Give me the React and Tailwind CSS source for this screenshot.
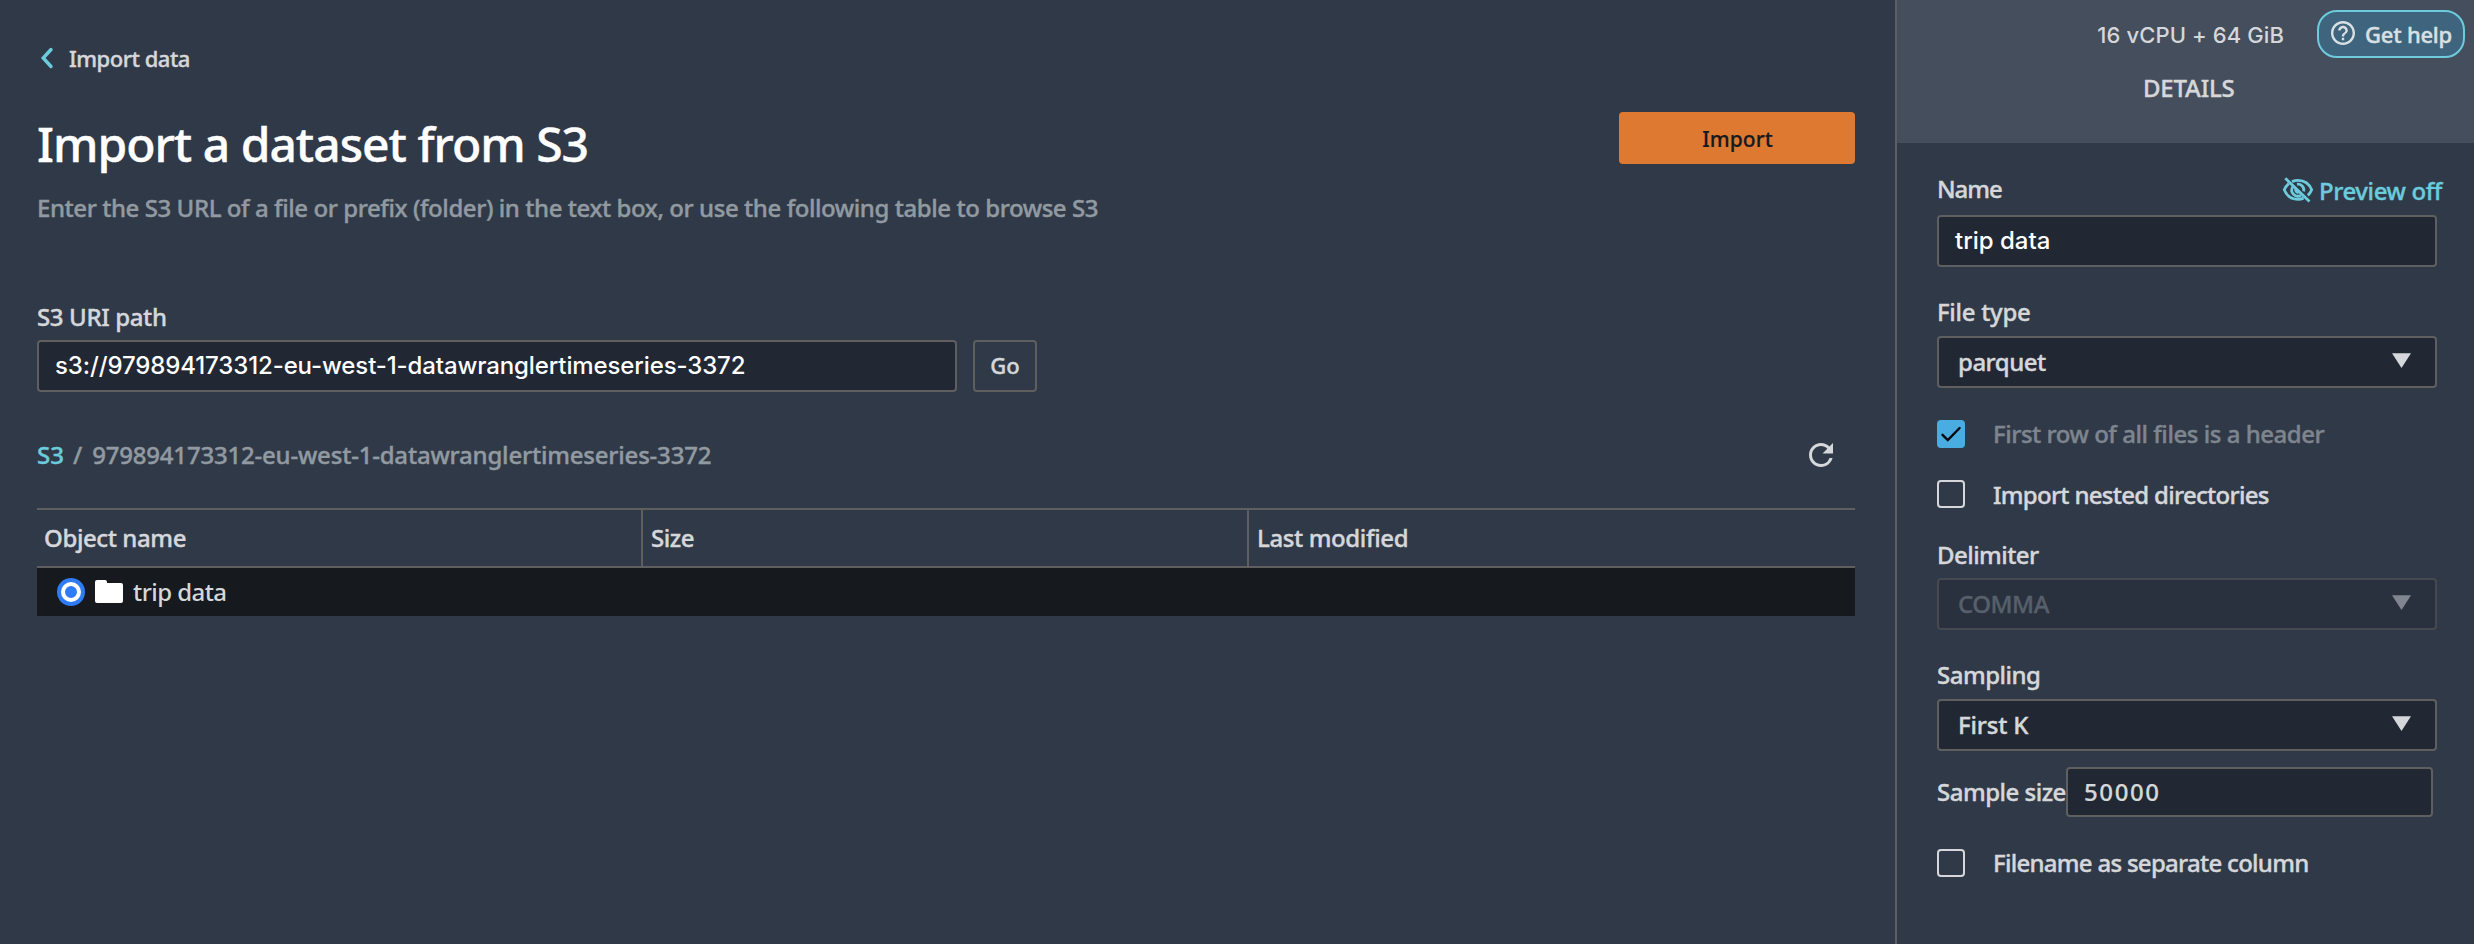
import React from "react";

function Caret({ className = "" }) {
  return (
    <svg width="19" height="15" viewBox="0 0 19 15" className={className}>
      <path d="M0 0.3H19L9.5 15Z" fill="currentColor" />
    </svg>
  );
}

function RefreshIcon() {
  return (
    <svg width="36" height="36" viewBox="0 0 24 24" fill="#d5d7da">
      <path d="M17.65 6.35A7.958 7.958 0 0 0 12 4c-4.42 0-7.99 3.58-7.99 8s3.57 8 7.99 8c3.73 0 6.84-2.55 7.73-6h-2.08A5.99 5.99 0 0 1 12 18c-3.31 0-6-2.69-6-6s2.69-6 6-6c1.66 0 3.14.69 4.22 1.78L13 11h7V4l-2.35 2.35z" />
    </svg>
  );
}

function HelpIcon() {
  return (
    <svg width="24" height="24" viewBox="2 2 20 20" fill="#d9e0e4" className="mb-0.5">
      <path d="M11 18h2v-2h-2v2zm1-16C6.48 2 2 6.48 2 12s4.48 10 10 10 10-4.48 10-10S17.520 2 12 2zm0 18c-4.410 0-8-3.590-8-8s3.590-8 8-8 8 3.590 8 8-3.590 8-8 8zm0-14c-2.210 0-4 1.790-4 4h2c0-1.100.9-2 2-2s2 .9 2 2c0 2-3 1.750-3 5h2c0-2.250 3-2.500 3-5 0-2.210-1.790-4-4-4z" />
    </svg>
  );
}

function EyeOffIcon() {
  return (
    <svg width="32" height="26" viewBox="0 0 32 26" fill="none" stroke="#6ccbdc" strokeWidth="2.8">
      <path d="M10 4.6C12 3.700 14 3.300 16 3.300c6.500 0 11.500 4 13.700 9.500-.9 2.200-2.200 4.100-3.900 5.600M21.600 21.100c-1.800.8-3.600 1.200-5.600 1.200-6.500 0-11.500-4-13.700-9.500 1-2.500 2.500-4.500 4.500-6.200" />
      <path d="M10.800 9.800a6 6 0 0 0 8.200 8.400M15 7.200a6 6 0 0 1 6.700 7.200" />
      <path d="M13.600 12.200a3 3 0 0 0 3 3.400" />
      <path d="M3.300 1.300L27.500 24.500" />
    </svg>
  );
}

function Select({ value, disabled = false, tracking }) {
  return (
    <div
      className={
        "flex h-[52px] w-[500px] items-center justify-between rounded-[4px] border-2 pl-[19px] pr-6 text-[24px] " +
        (disabled
          ? "border-[#46494f] bg-[#28313d] text-[#575f6b]"
          : "border-[#5f5f5f] bg-[#212733] text-[#d5d7da]")
      }
    >
      <span className={tracking}>{value}</span>
      <Caret className={disabled ? "mb-[3px] text-[#80868f]" : "mb-[3px] text-[#d5d7da]"} />
    </div>
  );
}

function Check({ checked = false, label, tracking }) {
  return (
    <div className="flex h-8 items-start">
      {checked ? (
        <div className="h-7 w-7 rounded-[4px] bg-[#4aade1]">
          <svg width="28" height="28" viewBox="0 0 28 28" fill="none" stroke="#05090c" strokeWidth="2.4">
            <path d="M5.500 14.800L10.800 20L22.600 8" strokeLinecap="round" />
          </svg>
        </div>
      ) : (
        <div className="h-7 w-7 rounded-[4px] border-2 border-[#d5d7da]" />
      )}
      <span className={"ml-7 text-[24px] leading-8 " + (checked ? "text-[#7e858e] " : "text-[#d5d7da] ") + tracking}>
        {label}
      </span>
    </div>
  );
}

export default function App() {
  return (
    <div className="flex h-[944px] w-[2474px] overflow-hidden whitespace-nowrap bg-[#303947] font-['Noto_Sans',sans-serif] font-medium text-[#d5d7da] [-webkit-text-stroke-width:0.4px]">
      <main className="flex w-[1895px] flex-col pl-[37px] pr-10 pt-[42px]">
        <a className="flex h-8 items-center pl-[3px]">
          <svg width="14" height="22" viewBox="0 0 14 22" fill="none" stroke="#6ccbdc" strokeWidth="3.4">
            <path d="M11 2.500L3.200 11L11 19.500" strokeLinecap="round" />
          </svg>
          <span className="ml-[15px] text-[22px] leading-8 tracking-[-0.5px]">Import data</span>
        </a>

        <div className="mt-[38px] flex items-start justify-between">
          <h1 className="text-[48px] leading-[64px] tracking-[-1px] text-white">Import a dataset from S3</h1>
          <button className="flex h-[52px] w-[236px] items-center justify-center rounded-[4px] bg-[#de7932] pl-px pt-[3px] text-[21px] tracking-[0.1px] text-[#16191f] [-webkit-text-stroke-width:0.2px]">
            Import
          </button>
        </div>
        <p className="mt-4 text-[24px] leading-8 tracking-[-0.43px] text-[#919aa1]">
          Enter the S3 URL of a file or prefix (folder) in the text box, or use the following table to browse S3
        </p>

        <label className="mt-[77px] text-[24px] leading-8 tracking-[-0.37px]">S3 URI path</label>
        <div className="mt-[7px] flex gap-4 [-webkit-text-stroke-width:0]">
          <div className="flex h-[52px] w-[920px] items-center rounded-[4px] border-2 border-[#5f5f5f] bg-[#212733] pl-4 font-['Inter',sans-serif] text-[24px] tracking-[-0.12px] text-white">
            s3://979894173312-eu-west-1-datawranglertimeseries-3372
          </div>
          <button className="flex h-[52px] w-16 items-center justify-center rounded-[4px] border-2 border-[#5f5f5f] pb-px text-[22px] [-webkit-text-stroke-width:0.4px]">
            Go
          </button>
        </div>

        <div className="mt-[45px] flex h-9 items-center justify-between pr-4 text-[24px]">
          <div className="flex leading-8 text-[#919aa1]">
            <span className="text-[#6ccbdc]">S3</span>
            <span className="ml-[9px]">/</span>
            <span className="ml-[10px] tracking-[-0.2px]">979894173312-eu-west-1-datawranglertimeseries-3372</span>
          </div>
          <RefreshIcon />
        </div>

        <div className="mt-[35px] w-[1818px] text-[24px] leading-8">
          <div className="grid h-[60px] grid-cols-3 border-y-2 border-[#5f5f5f]">
            <div className="flex items-center border-r-2 border-[#5f5f5f] pl-[7px] tracking-[-0.4px]">Object name</div>
            <div className="flex items-center border-r-2 border-[#5f5f5f] pl-2 tracking-[-0.45px]">Size</div>
            <div className="flex items-center pl-2 tracking-[-0.38px]">Last modified</div>
          </div>
          <div className="flex h-12 items-center bg-[#16191d] pl-5">
            <span className="mb-px flex h-7 w-7 items-center justify-center rounded-full bg-[#2f7bf6]">
              <span className="h-5 w-5 rounded-full border-4 border-white" />
            </span>
            <svg width="28" height="23" viewBox="0 0 28 23" className="mb-0.5 ml-[10px]">
              <path d="M2 0H10Q12 0 12 2V3H26Q28 3 28 5V21Q28 23 26 23H2Q0 23 0 21V2Q0 0 2 0Z" fill="#fff" />
            </svg>
            <span className="ml-[10px] tracking-[-0.55px] [-webkit-text-stroke-width:0]">trip data</span>
          </div>
        </div>
      </main>

      <aside className="flex w-[579px] flex-col border-l-2 border-[#5f5f5f]">
        <header className="flex h-[143px] flex-col bg-[#454e5d] pr-[9px] pt-[10px]">
          <div className="flex h-12 items-center justify-end gap-[33px]">
            <span className="pt-0.5 font-['Inter',sans-serif] text-[22px] tracking-[0.1px] [-webkit-text-stroke-width:0]">
              16 vCPU + 64 GiB
            </span>
            <div className="flex h-12 w-[148px] items-center rounded-[20px] border-2 border-[#6ccbdc] bg-[#3f647d] pl-3 text-[22px] tracking-[-0.22px] text-[#d9e0e4]">
              <HelpIcon />
              <span className="ml-[10px]">Get help</span>
            </div>
          </div>
          <div className="ml-[246px] mt-[14px] text-[24px] leading-8 tracking-[-0.2px]">DETAILS</div>
        </header>

        <section className="flex flex-col pl-10">
          <div className="mt-[30px] flex h-[34px] w-[505px] justify-between text-[24px] leading-8">
            <span className="tracking-[-1px]">Name</span>
            <span className="flex items-start pt-0.5 tracking-[-0.4px] text-[#6ccbdc]">
              <span className="mr-[5px] pt-[2px]">
                <EyeOffIcon />
              </span>
              Preview off
            </span>
          </div>
          <div className="mt-2 flex h-[52px] w-[500px] items-center rounded-[4px] border-2 border-[#5f5f5f] bg-[#212733] pl-4 font-['Inter',sans-serif] text-[24px] text-white [-webkit-text-stroke-width:0]">
            trip data
          </div>

          <label className="mt-[29px] text-[24px] leading-8 tracking-[-0.3px]">File type</label>
          <div className="mt-[8px]">
            <Select value="parquet" tracking="tracking-[-0.5px]" />
          </div>

          <div className="mt-8">
            <Check checked label="First row of all files is a header" tracking="-mt-[2px] tracking-[-0.47px]" />
          </div>
          <div className="mt-7">
            <Check label="Import nested directories" tracking="-mt-px tracking-[-0.71px]" />
          </div>

          <label className="mt-[27px] text-[24px] leading-8 tracking-[-0.55px]">Delimiter</label>
          <div className="mt-[7px]">
            <Select value="COMMA" disabled tracking="tracking-[-0.5px]" />
          </div>

          <label className="mt-[29px] text-[24px] leading-8 tracking-[-0.5px]">Sampling</label>
          <div className="mt-2">
            <Select value="First K" tracking="tracking-[-0.2px]" />
          </div>

          <div className="mt-4 flex h-[50px] items-center text-[24px]">
            <span className="w-[129px] tracking-[-0.5px]">Sample size</span>
            <div className="flex h-[50px] w-[367px] items-center rounded-[4px] border-2 border-[#5f5f5f] bg-[#212733] pl-4 tracking-[1.6px] [-webkit-text-stroke-width:0.2px]">
              50000
            </div>
          </div>

          <div className="mt-8">
            <Check label="Filename as separate column" tracking="-mt-[2px] tracking-[-0.72px]" />
          </div>
        </section>
      </aside>
    </div>
  );
}
